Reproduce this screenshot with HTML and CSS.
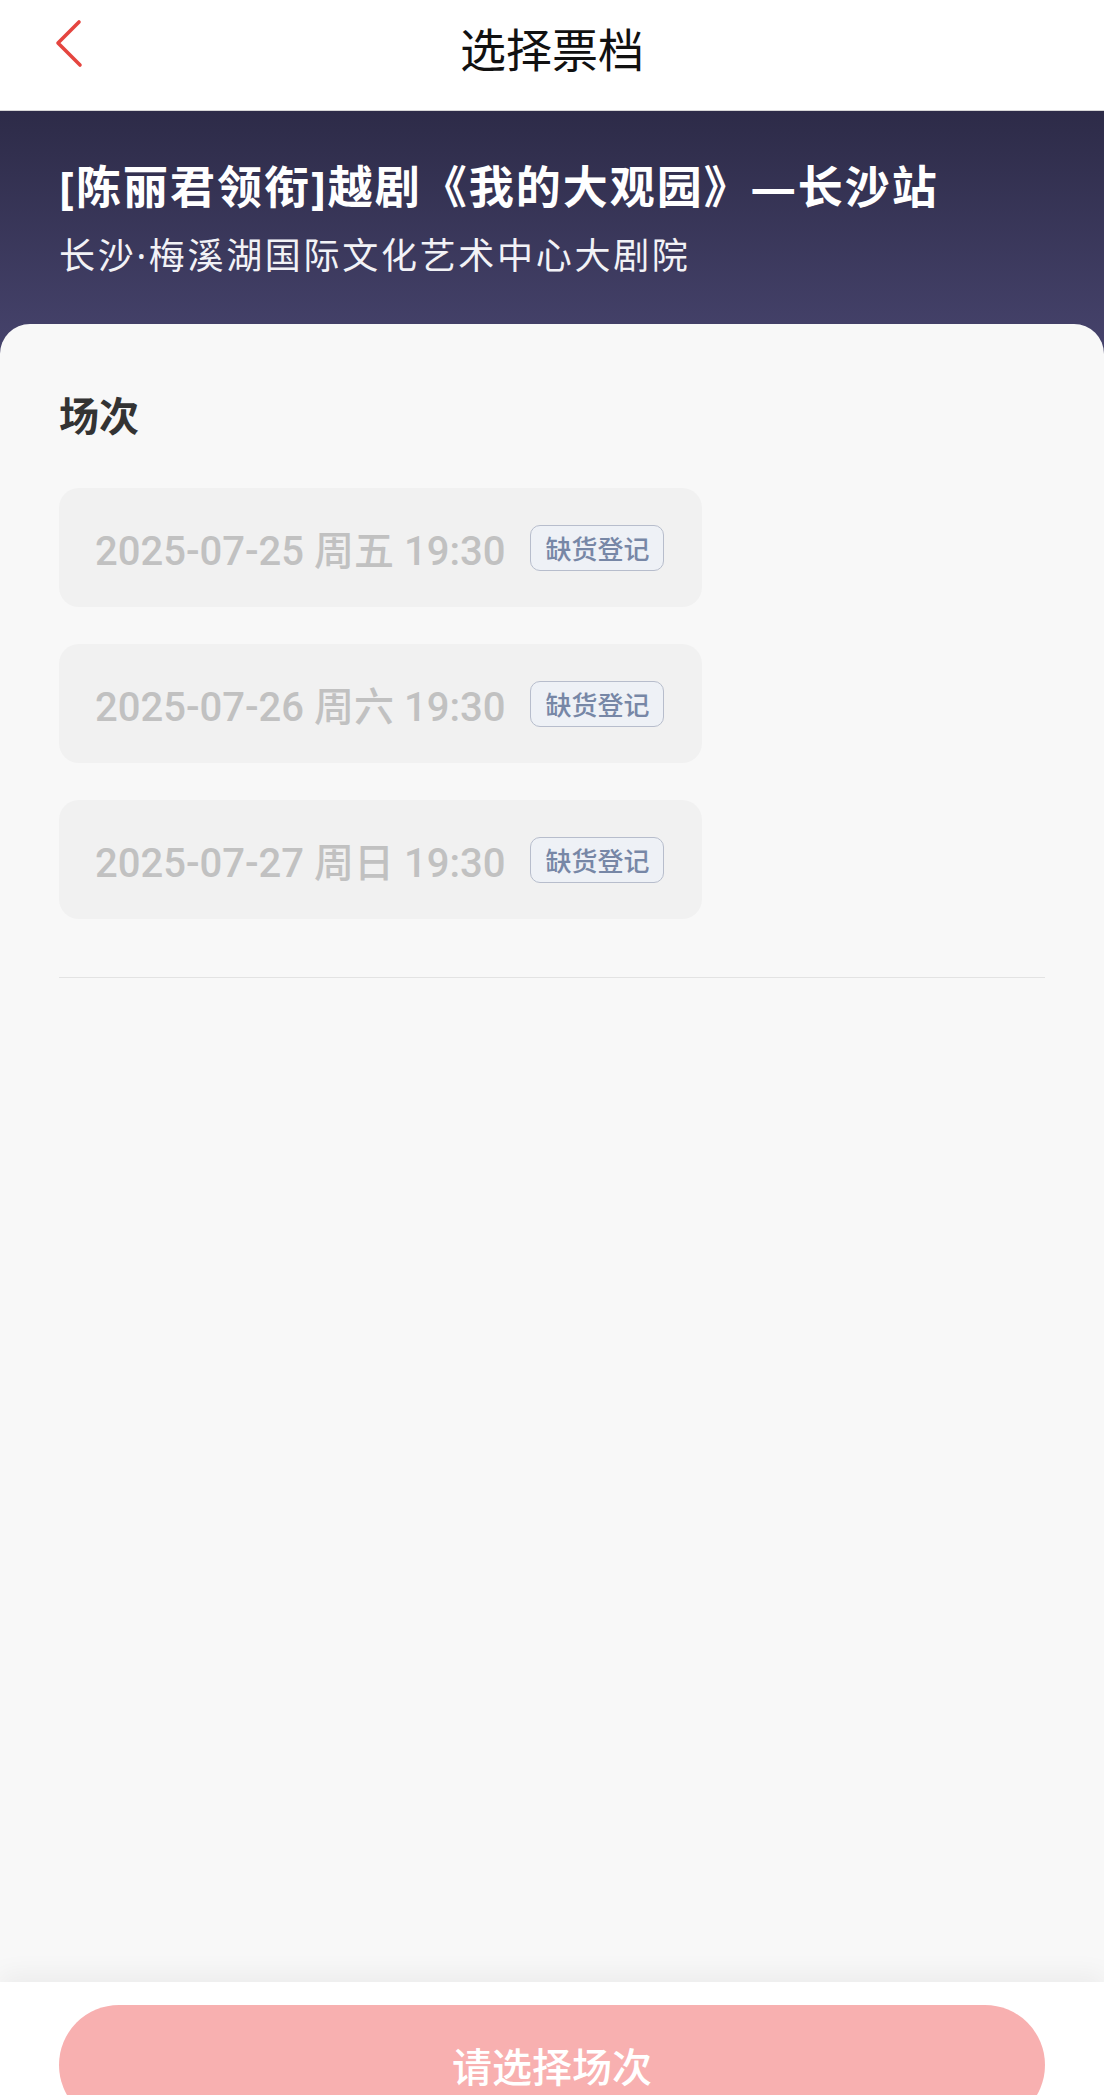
FILE: index.html
```html
<!DOCTYPE html>
<html lang="zh-CN">
  <head>
    <meta charset="UTF-8" />
    <meta name="viewport" content="width=device-width, initial-scale=1.0" />
    <title>选择票档</title>
    <link rel="stylesheet" href="styles.css">
  </head>
  <body>
    <div class="page">
      <header class="topbar">
        <a class="back" href="#">
          <svg width="34" height="52" viewBox="0 0 34 52">
            <path d="M25 4 L4 25 L26 47" fill="none" stroke="#e5453f" stroke-width="3.6" stroke-linecap="round" stroke-linejoin="round" />
          </svg>
        </a>
        <h1>选择票档</h1>
      </header>

      <section class="show">
        <h2>[陈丽君领衔]越剧《我的大观园》—长沙站</h2>
        <p>长沙·梅溪湖国际文化艺术中心大剧院</p>
      </section>

      <main class="card">
        <h3>场次</h3>
        <ul class="sessions">
          <li class="session">
            <span class="time">2025-07-25 周五 19:30</span>
            <span class="tag">缺货登记</span>
          </li>
          <li class="session">
            <span class="time">2025-07-26 周六 19:30</span>
            <span class="tag">缺货登记</span>
          </li>
          <li class="session">
            <span class="time">2025-07-27 周日 19:30</span>
            <span class="tag">缺货登记</span>
          </li>
        </ul>
        <div class="divider"></div>
      </main>

      <footer class="bottombar">
        <button type="button" disabled>请选择场次</button>
      </footer>
    </div>
  </body>
</html>
```

FILE: styles.css
```css
* {
  box-sizing: border-box;
}
body {
  margin: 0;
  font-family: "Noto Sans CJK SC", "Noto Sans", sans-serif;
  background: #ffffff;
  overflow: hidden;
}
.page {
  height: 100vh;
  display: flex;
  flex-direction: column;
  overflow: hidden;
}
.topbar {
  height: 111px;
  flex-shrink: 0;
  display: flex;
  align-items: center;
  justify-content: center;
  padding-bottom: 16px;
  position: relative;
  background: #ffffff;
  border-bottom: 1px solid #d6d6d6;
}
.back {
  position: absolute;
  left: 54px;
  top: 18px;
  display: block;
}
.topbar h1 {
  margin: 0;
  font-size: 46px;
  font-weight: 400;
  color: #111111;
  line-height: 1;
}
.show {
  flex-shrink: 0;
  padding: 48px 59px 75px;
  background: linear-gradient(180deg, #2d2b48 0%, #46436c 100%);
  color: #ffffff;
}
.show h2 {
  margin: 0;
  font-family: "Noto Sans", "Noto Sans CJK SC", sans-serif;
  font-size: 45px;
  font-weight: 700;
  line-height: 56px;
  letter-spacing: 2px;
  white-space: nowrap;
}
.show p {
  margin: 18px 0 0;
  font-family: "Noto Sans", "Noto Sans CJK SC", sans-serif;
  font-size: 36px;
  line-height: 46px;
  letter-spacing: 2.7px;
  color: #f2f2f6;
}
.card {
  flex: 1;
  margin-top: -30px;
  padding: 62px 59px 0;
  background: #f8f8f8;
  border-radius: 30px 30px 0 0;
}
.card h3 {
  margin: 0;
  font-size: 40px;
  font-weight: 700;
  line-height: 56px;
  color: #333333;
}
.sessions {
  list-style: none;
  margin: 46px 0 0;
  padding: 0;
  display: flex;
  flex-direction: column;
  gap: 37px;
}
.session {
  width: 643px;
  height: 119px;
  padding-left: 36px;
  display: flex;
  align-items: center;
  gap: 25px;
  background: #f1f1f1;
  border-radius: 20px;
}
.time {
  font-family: Roboto, "Noto Sans CJK SC", sans-serif;
  font-size: 40px;
  font-weight: 500;
  color: #c1c1c1;
  white-space: nowrap;
}
.tag {
  height: 46px;
  padding: 0 14px;
  display: flex;
  align-items: center;
  font-size: 26px;
  font-weight: 500;
  color: #7787a6;
  background: #eef1f6;
  border: 1.5px solid #b7bdcc;
  border-radius: 10px;
}
.divider {
  margin-top: 58px;
  height: 1px;
  background: #e3e3e3;
}
.bottombar {
  height: 113px;
  flex-shrink: 0;
  padding: 23px 59px 0;
  background: #ffffff;
  box-shadow: 0 -8px 24px rgba(0, 0, 0, 0.05);
  position: relative;
}
.bottombar button {
  width: 100%;
  height: 120px;
  border: none;
  border-radius: 60px;
  background: #f8b0b0;
  color: #ffffff;
  font-family: inherit;
  font-size: 40px;
  font-weight: 500;
}
```
